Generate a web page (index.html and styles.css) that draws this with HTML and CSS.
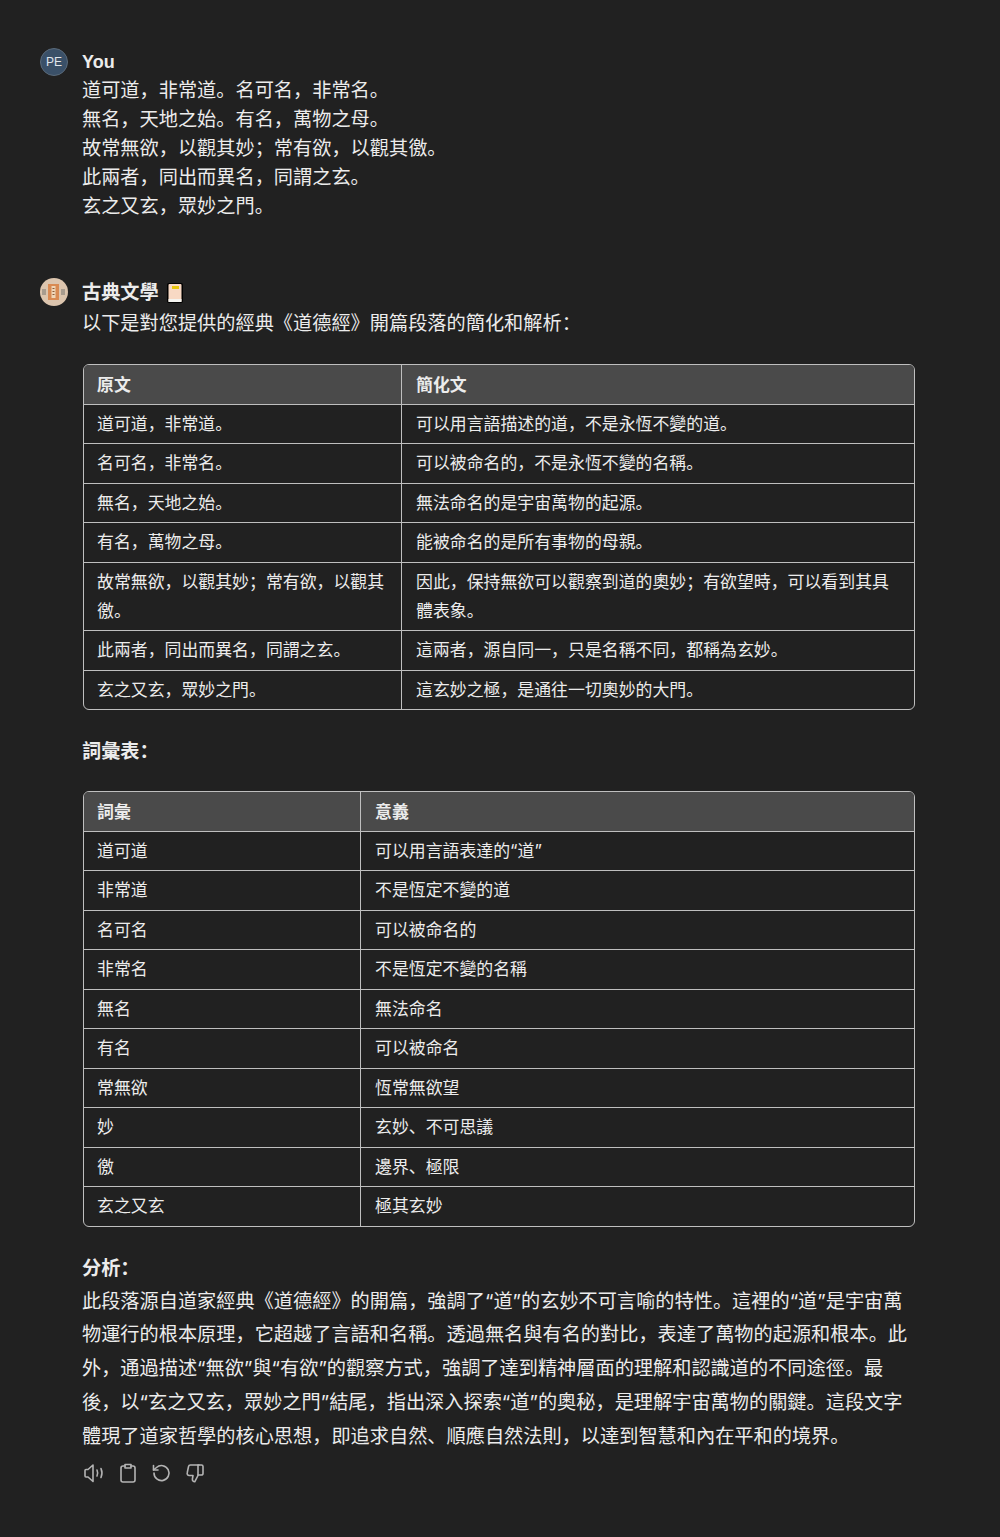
FILE: index.html
```html
<!DOCTYPE html>
<html lang="zh">
  <head>
    <meta charset="utf-8">
    <title>古典文學</title>
    <link rel="stylesheet" href="styles.css">
  </head>
  <body>
    <div class="Message Message-User">
      <div class="Avatar Avatar-User">PE</div>
      <div class="Message-Body">
        <div class="Author Author-User">You</div>
        <div class="Poem">
          <div>道可道，非常道。名可名，非常名。</div>
          <div>無名，天地之始。有名，萬物之母。</div>
          <div>故常無欲，以觀其妙；常有欲，以觀其徼。</div>
          <div>此兩者，同出而異名，同謂之玄。</div>
          <div>玄之又玄，眾妙之門。</div>
        </div>
      </div>
    </div>

    <div class="Message Message-Bot">
      <div class="Avatar Avatar-Bot">
        <svg width="28" height="28" viewBox="0 0 28 28">
          <rect x="8" y="6" width="11" height="16" fill="#d98a52"/>
          <rect x="11.500" y="8" width="4" height="12" fill="#efd6b8"/>
          <rect x="12.500" y="10" width="2" height="1" fill="#8a5a35"/>
          <rect x="12.500" y="13" width="2" height="1" fill="#8a5a35"/>
          <rect x="12.500" y="16" width="2" height="1" fill="#8a5a35"/>
          <rect x="2" y="11" width="4" height="6" fill="#a89c8e"/>
          <rect x="21" y="11" width="4" height="6" fill="#a89c8e"/>
        </svg>
      </div>
      <div class="Message-Body">
        <div class="Author">古典文學
          <svg class="Book" width="16" height="20" viewBox="0 0 16 20">
            <rect x="0" y="0" width="16" height="20" rx="2" fill="#000"/>
            <rect x="1.500" y="1" width="13" height="18" rx="1" fill="#f8d9c4"/>
            <rect x="1.500" y="16" width="13" height="3" fill="#f4f4f0"/>
            <rect x="5" y="3" width="7" height="3" fill="#e8c60c"/>
          </svg>
        </div>
        <p class="Intro">以下是對您提供的經典《道德經》開篇段落的簡化和解析：</p>

        <div class="Table-Wrap">
          <table class="Table-Text">
            <thead>
              <tr><th>原文</th><th>簡化文</th></tr>
            </thead>
            <tbody>
              <tr><td>道可道，非常道。</td><td>可以用言語描述的道，不是永恆不變的道。</td></tr>
              <tr><td>名可名，非常名。</td><td>可以被命名的，不是永恆不變的名稱。</td></tr>
              <tr><td>無名，天地之始。</td><td>無法命名的是宇宙萬物的起源。</td></tr>
              <tr><td>有名，萬物之母。</td><td>能被命名的是所有事物的母親。</td></tr>
              <tr><td>故常無欲，以觀其妙；常有欲，以觀其徼。</td><td>因此，保持無欲可以觀察到道的奧妙；有欲望時，可以看到其具體表象。</td></tr>
              <tr><td>此兩者，同出而異名，同謂之玄。</td><td>這兩者，源自同一，只是名稱不同，都稱為玄妙。</td></tr>
              <tr><td>玄之又玄，眾妙之門。</td><td>這玄妙之極，是通往一切奧妙的大門。</td></tr>
            </tbody>
          </table>
        </div>

        <p class="Heading">詞彙表：</p>

        <div class="Table-Wrap">
          <table class="Table-Words">
            <thead>
              <tr><th>詞彙</th><th>意義</th></tr>
            </thead>
            <tbody>
              <tr><td>道可道</td><td>可以用言語表達的“道”</td></tr>
              <tr><td>非常道</td><td>不是恆定不變的道</td></tr>
              <tr><td>名可名</td><td>可以被命名的</td></tr>
              <tr><td>非常名</td><td>不是恆定不變的名稱</td></tr>
              <tr><td>無名</td><td>無法命名</td></tr>
              <tr><td>有名</td><td>可以被命名</td></tr>
              <tr><td>常無欲</td><td>恆常無欲望</td></tr>
              <tr><td>妙</td><td>玄妙、不可思議</td></tr>
              <tr><td>徼</td><td>邊界、極限</td></tr>
              <tr><td>玄之又玄</td><td>極其玄妙</td></tr>
            </tbody>
          </table>
        </div>

        <p class="Heading Heading-Analysis">分析：</p>
        <p class="Analysis">此段落源自道家經典《道德經》的開篇，強調了“道”的玄妙不可言喻的特性。這裡的“道”是宇宙萬物運行的根本原理，它超越了言語和名稱。透過無名與有名的對比，表達了萬物的起源和根本。此外，通過描述“無欲”與“有欲”的觀察方式，強調了達到精神層面的理解和認識道的不同途徑。最後，以“玄之又玄，眾妙之門”結尾，指出深入探索“道”的奧秘，是理解宇宙萬物的關鍵。這段文字體現了道家哲學的核心思想，即追求自然、順應自然法則，以達到智慧和內在平和的境界。</p>

        <div class="Actions">
          <svg width="24" height="24" viewBox="0 0 24 24" fill="none" stroke="currentColor" stroke-width="1.600" stroke-linejoin="round" stroke-linecap="round">
            <path d="M3 9.500v5.500a1 1 0 0 0 1 1h2l5 4.500V4L6 8.500H4a1 1 0 0 0-1 1z"/>
            <path d="M15 9c.8 1.800.8 4.200 0 6"/>
            <path d="M19 7.500c1.300 3 1.300 6 0 9"/>
          </svg>
          <svg width="24" height="24" viewBox="0 0 24 24" fill="none" stroke="currentColor" stroke-width="1.600" stroke-linejoin="round" stroke-linecap="round">
            <path d="M9 5H7a2 2 0 0 0-2 2v12a2 2 0 0 0 2 2h10a2 2 0 0 0 2-2V7a2 2 0 0 0-2-2h-2"/>
            <path d="M9 3.500h6V7H9z"/>
          </svg>
          <svg width="24" height="24" viewBox="0 0 24 24" fill="none" stroke="currentColor" stroke-width="1.600" stroke-linejoin="round" stroke-linecap="round">
            <path d="M5 12a7.500 7.500 0 1 0 2.500-5.500L4.500 9"/>
            <path d="M4.500 4.500V9H9"/>
          </svg>
          <svg width="24" height="24" viewBox="0 0 24 24" fill="none" stroke="currentColor" stroke-width="1.600" stroke-linejoin="round" stroke-linecap="round">
            <path d="M16 4H7.500a2 2 0 0 0-2 1.600L4.200 12a2 2 0 0 0 2 2.500H10l-.6 3.500c-.2 1.500 1 2.800 2.300 2.800l3.300-6.300V4z"/>
            <path d="M15 4h3.500A1.500 1.500 0 0 1 20 5.500v7a1.500 1.500 0 0 1-1.500 1.500H15"/>
          </svg>
        </div>
      </div>
    </div>
  </body>
</html>
```

FILE: styles.css
```css
html {
  background: #212121;
}

body {
  margin: 0;
  padding: 48px 85px 0 40px;
  height: 1489px;
  background: #212121;
  color: #ececec;
  font-family: 'Liberation Sans', 'Noto Sans CJK SC', sans-serif;
  font-size: 19.200px;
}

.Message {
  display: flex;
  gap: 14px;
}

.Message-User {
  margin-bottom: 57px;
}

.Message-Body {
  flex: 1;
  min-width: 0;
}

.Avatar {
  display: flex;
  flex: none;
  align-items: center;
  justify-content: center;
  width: 28px;
  height: 28px;
  border-radius: 50%;
  overflow: hidden;
}

.Avatar-User {
  background: #3a5068;
  border: 1px solid #5a6a7a;
  box-sizing: border-box;
  font-size: 12px;
  color: #e0e6ec;
}

.Avatar-Bot {
  background: #dcc5ae;
}

.Author {
  display: flex;
  align-items: center;
  gap: 8px;
  height: 29px;
  font-weight: 700;
  line-height: 29px;
}

.Author-User {
  height: 28px;
  font-size: 18px;
}

.Poem {
  line-height: 29px;
}

.Intro {
  margin: 2px 0 0;
  line-height: 29px;
}

.Table-Wrap {
  margin: 26px 0 0 1px;
  border: 1px solid #bfbfbf;
  border-radius: 6px;
  overflow: hidden;
}

.Heading + .Table-Wrap {
  margin-top: 25px;
}

table {
  width: 100%;
  border-collapse: collapse;
  table-layout: fixed;
  font-family: Inter, 'Noto Sans CJK SC', sans-serif;
  font-size: 16.900px;
  line-height: 29px;
}

th,
td {
  padding: 5.250px 14px 4.250px;
  border-left: 1px solid #bfbfbf;
  border-top: 1px solid #bfbfbf;
  text-align: left;
  vertical-align: top;
}

th {
  padding-top: 6px;
  padding-bottom: 3.500px;
  border-top: none;
  background: #4a4a4a;
  font-weight: 700;
}

th:first-child,
td:first-child {
  padding-left: 13px;
  border-left: none;
}

.Table-Text th:first-child {
  width: 290px;
}

.Table-Words th:first-child {
  width: 249px;
}

.Heading {
  margin: 27px 0 0;
  font-weight: 700;
  line-height: 29px;
}

.Analysis {
  margin: 2px 0 0;
  font-family: Inter, 'Noto Sans CJK SC', sans-serif;
  line-height: 33.800px;
}

.Actions {
  display: flex;
  gap: 9.500px;
  margin-top: 8px;
  color: #b4b4b4;
}
```
